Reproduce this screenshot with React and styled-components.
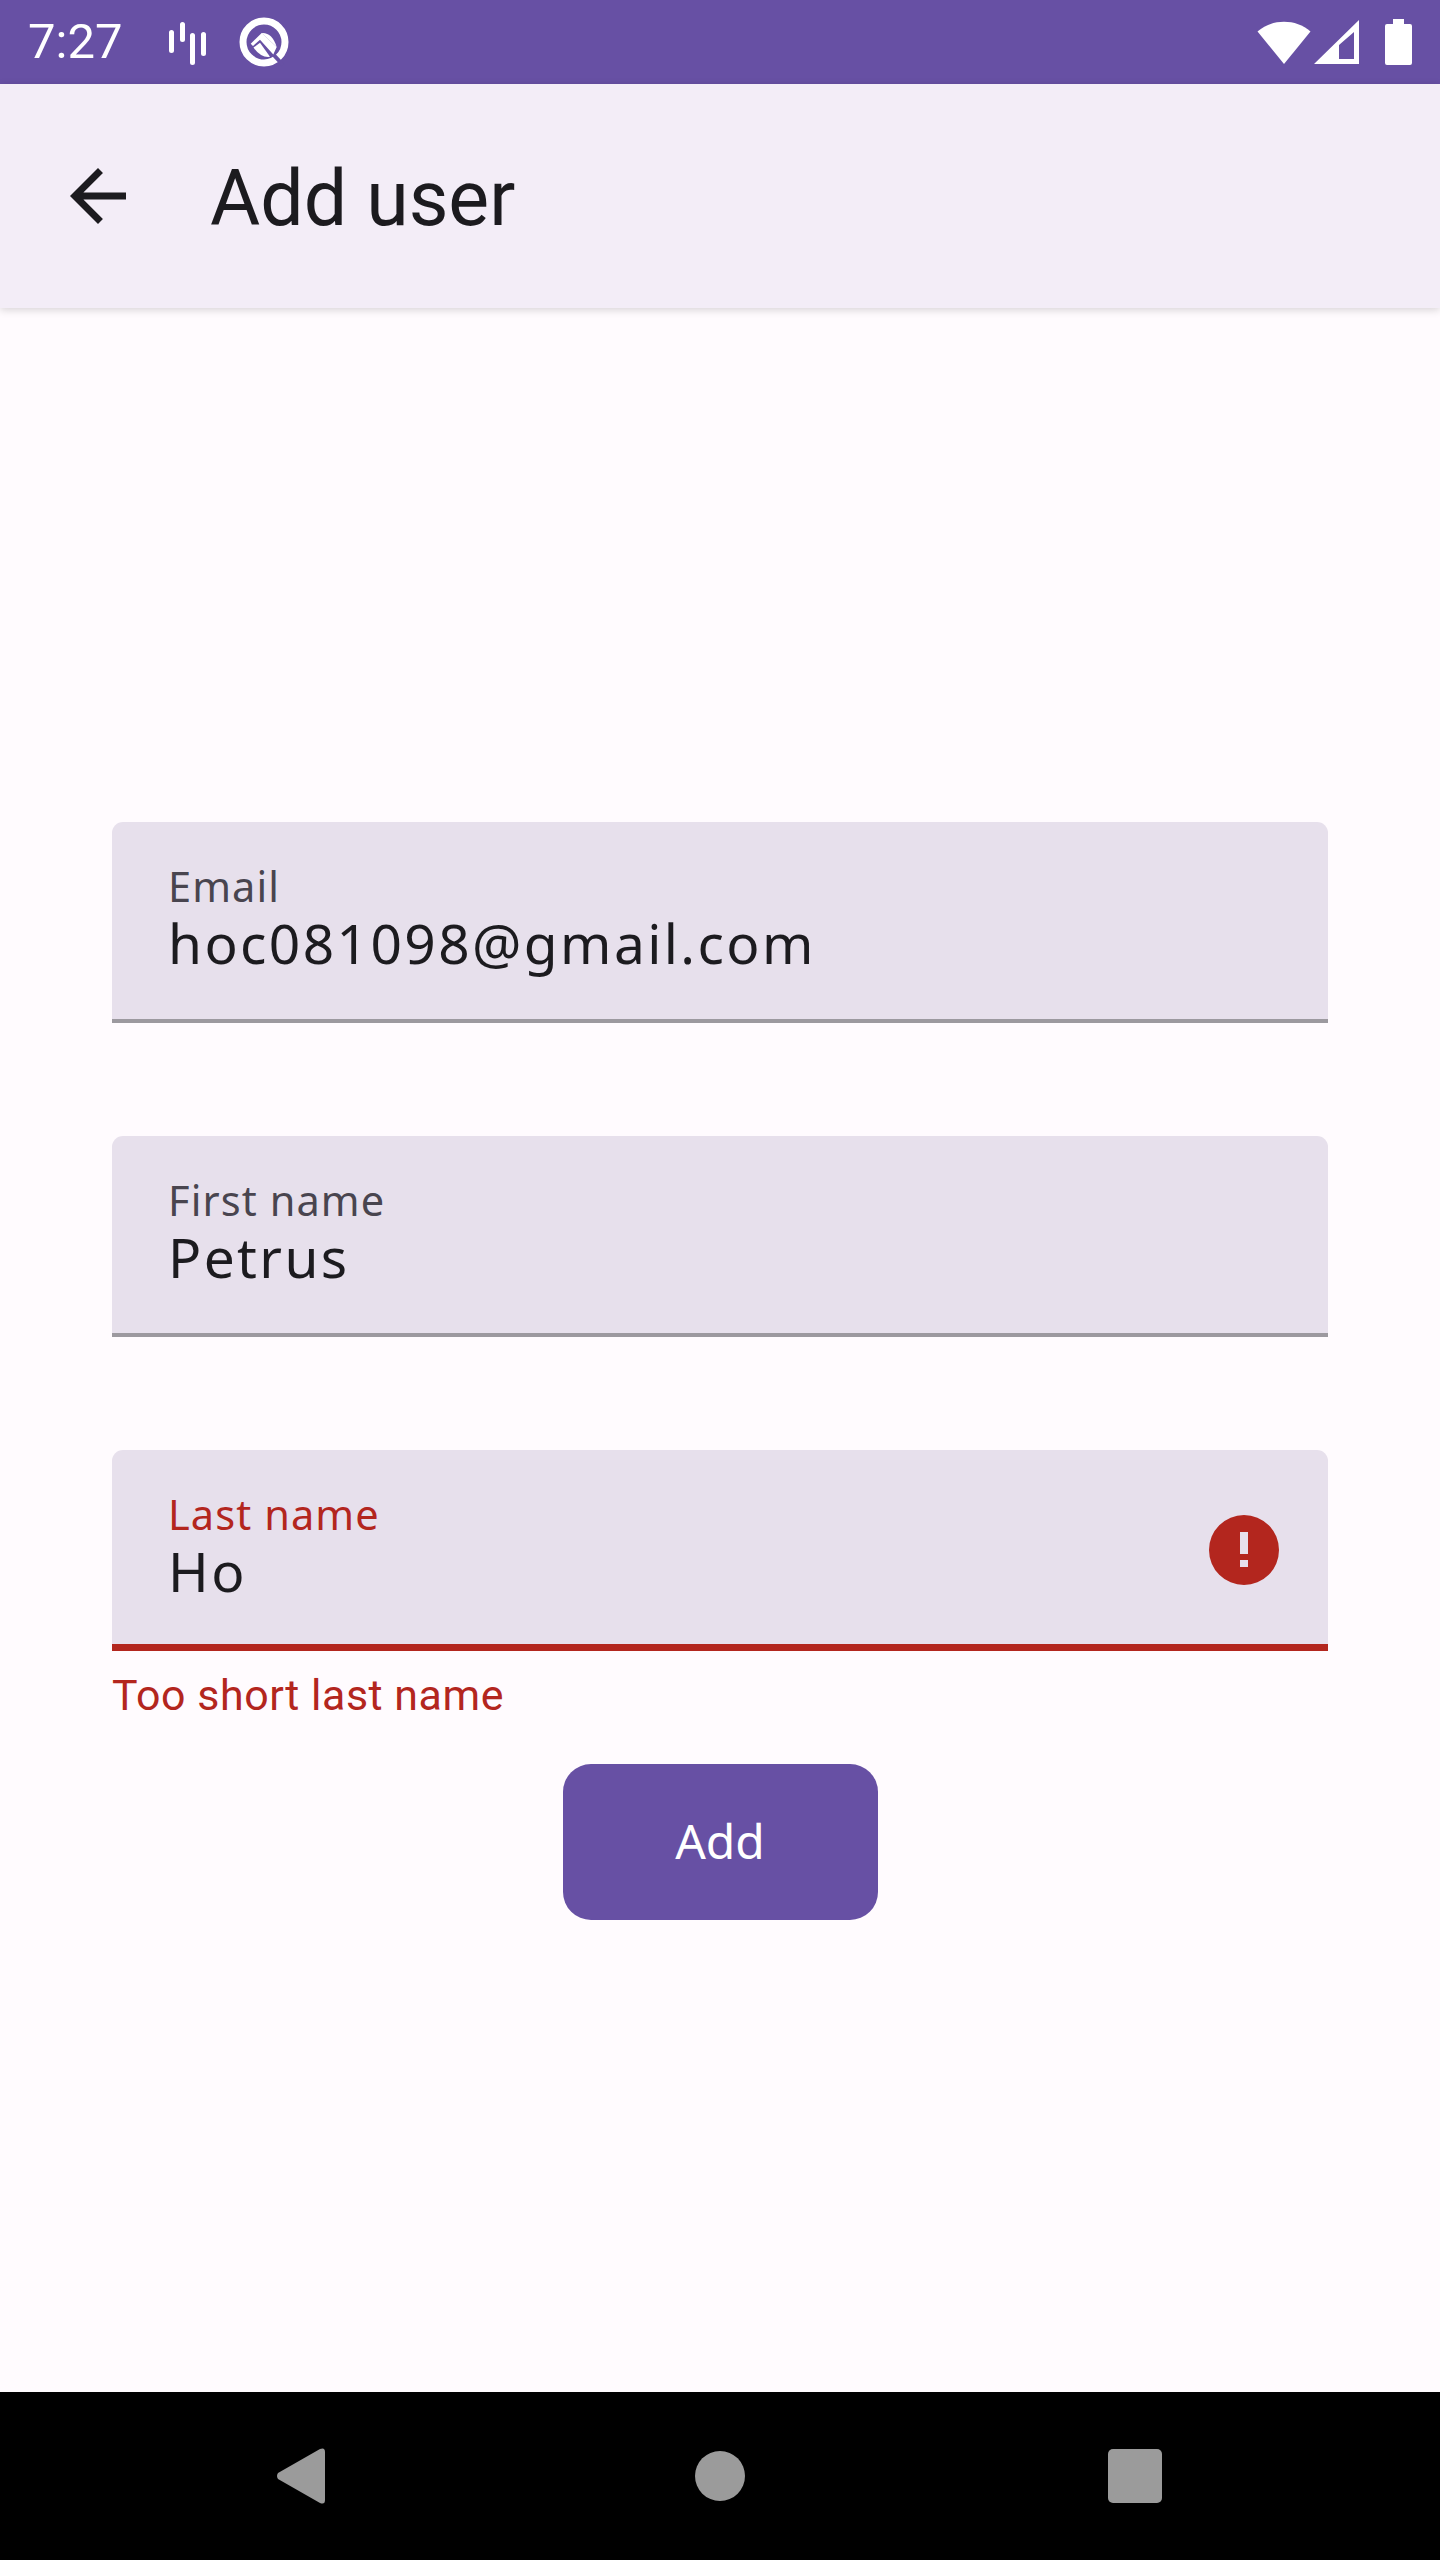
import React from 'react';
import styled, { createGlobalStyle } from 'styled-components';

const Global = createGlobalStyle`
  html, body { margin: 0; padding: 0; background: #fffbfe; }
  #root { width: 1440px; }
`;
const Screen = styled.div`
  width: 1440px; height: 2560px; display: flex; flex-direction: column;
  background: #fffbfe; overflow: hidden; font-family: "Noto Sans", sans-serif;
`;
const StatusBar = styled.div`
  height: 84px; flex: none; background: #6750a4; display: flex; align-items: center;
  padding: 0 28px; box-sizing: border-box; color: #fff;
`;
const Time = styled.span`
  font: 400 49px/84px Roboto, sans-serif; width: 141px; margin-top: -1px;
`;
const StatusLeftIcons = styled.div`display: flex; align-items: center; gap: 28px; flex: 1;`;
const StatusRightIcons = styled.div`display: flex; align-items: center;`;
const AppBar = styled.header`
  height: 224px; flex: none; background: #f3edf7; display: flex; align-items: center;
  padding-left: 56px; box-sizing: border-box; position: relative;
  box-shadow: 0 2px 8px rgba(0,0,0,.16);
`;
const BackIcon = styled.svg`width: 84px; height: 84px; fill: #1c1b1f; flex: none;`;
const Title = styled.h1`
  margin: 6px 0 0 70px; font: 400 77px/1 Roboto, sans-serif; color: #1c1b1f;
`;
const Main = styled.main`
  flex: 1; display: flex; flex-direction: column; padding: 514px 112px 0;
`;
const FieldBlock = styled.div`
  margin-bottom: ${p => p.$error ? 0 : 113}px;
`;
const Field = styled.div`
  height: 201px; box-sizing: border-box; background: #e7e0ec;
  border-radius: 11px 11px 0 0; padding: 37px 56px 0 56px;
  border-bottom: ${p => p.$error ? '7px solid #b3261e' : '4px solid #9c999f'};
  display: flex; align-items: flex-start; justify-content: space-between;
`;
const FieldText = styled.div`display: flex; flex-direction: column;`;
const Label = styled.label`
  font: 400 41.5px/54px "Noto Sans", sans-serif; letter-spacing: 1.1px;
  color: ${p => p.$error ? '#b3261e' : '#49454f'};
`;
const Value = styled.div`
  font: 400 55px/60px "Noto Sans", sans-serif; color: #1c1b1f; letter-spacing: 2.4px;
`;
const ErrorIcon = styled.svg`width: 70px; height: 70px; margin: 28px -7px 0 0; flex: none;`;
const ErrorText = styled.div`
  margin-top: 16px; font: 400 42.9px/56px Roboto, sans-serif; letter-spacing: .55px; color: #b3261e;
`;
const AddButton = styled.button`
  align-self: center; width: 315px; height: 156px; margin-top: 41px; border: 0; border-radius: 28px;
  padding: 0 0 3px; background: #6750a4; color: #fff; font: 400 48px/1 "Noto Sans", sans-serif;
`;
const NavBar = styled.nav`
  height: 168px; flex: none; background: #000; display: flex; align-items: center;
  padding-left: 277px;
`;
const NavIcon = styled.svg`display: block; fill: #9b9b9b; flex: none; margin-left: ${p => p.$gap || 0}px;`;

export default function App() {
  return (
    <Screen>
      <Global />
      <StatusBar>
        <Time>7:27</Time>
        <StatusLeftIcons>
          <svg width="40" height="46" viewBox="0 0 40 46" fill="none" stroke="#fff" strokeWidth="5" strokeLinecap="round">
            <path d="M2.5 13.5v18M13.5 5.5v15M23.5 16.5v27M34.5 15.5v19" />
          </svg>
          <svg width="54" height="54" viewBox="0 0 54 54" fill="none">
            <circle cx="27" cy="27" r="21" stroke="#fff" strokeWidth="7" />
            <path d="M34 37 L46 50" stroke="#6750a4" strokeWidth="4" />
            <path d="M24.7 18 L13.7 28.8 L16 31 L23 24.8 L36.3 39.5 L39.7 32 Z" fill="#fff" />
            <path d="M16.5 32.5 L23 27.8 L33 41.8 Q24 43 16.5 32.5 Z" fill="#fff" />
            <path d="M24.5 18 Q35 17 39.7 32 Z" fill="#fff" />
          </svg>
        </StatusLeftIcons>
        <StatusRightIcons>
          <svg width="54" height="46" viewBox="0 0 54 46" fill="#fff" style={{ marginRight: 3 }}>
            <path d="M0.5 12.5 C15 -0.5 39 -0.5 53.5 12.5 L27 45 Z" />
          </svg>
          <svg width="46" height="44" viewBox="0 0 46 44" fill="#fff" fillRule="evenodd" style={{ marginRight: 24 }}>
            <path d="M45 0 V44 H0 Z M40 12 L25 25 V39 H40 Z" />
          </svg>
          <svg width="28" height="46" viewBox="0 0 28 46" fill="#fff">
            <path d="M9 0h11v5h6a2 2 0 0 1 2 2v37a2 2 0 0 1-2 2H3a2 2 0 0 1-2-2V7a2 2 0 0 1 2-2h6z" />
          </svg>
        </StatusRightIcons>
      </StatusBar>
      <AppBar>
        <BackIcon viewBox="0 0 24 24"><path d="M20 11H7.83l5.59-5.59L12 4l-8 8 8 8 1.41-1.41L7.83 13H20v-2z" /></BackIcon>
        <Title>Add user</Title>
      </AppBar>
      <Main>
        <FieldBlock>
          <Field>
            <FieldText><Label>Email</Label><Value>hoc081098@gmail.com</Value></FieldText>
          </Field>
        </FieldBlock>
        <FieldBlock>
          <Field>
            <FieldText><Label>First name</Label><Value>Petrus</Value></FieldText>
          </Field>
        </FieldBlock>
        <FieldBlock $error>
          <Field $error>
            <FieldText><Label $error>Last name</Label><Value>Ho</Value></FieldText>
            <ErrorIcon viewBox="0 0 70 70">
              <path fillRule="evenodd" fill="#b3261e" d="M35 0a35 35 0 1 1 0 70a35 35 0 1 1 0-70z M31 17v22h8V17z M31 45v7h8v-7z" />
            </ErrorIcon>
          </Field>
          <ErrorText>Too short last name</ErrorText>
        </FieldBlock>
        <AddButton>Add</AddButton>
      </Main>
      <NavBar>
        <NavIcon width="48" height="56" viewBox="0 0 48 56"><path d="M1 25 L43 1 Q48 -1 48 4 V52 Q48 57 43 55 L1 31 Q-1 28 1 25 Z" /></NavIcon>
        <NavIcon $gap={370} width="50" height="50" viewBox="0 0 50 50"><circle cx="25" cy="25" r="25" /></NavIcon>
        <NavIcon $gap={363} width="54" height="54" viewBox="0 0 54 54"><rect width="54" height="54" rx="5" /></NavIcon>
      </NavBar>
    </Screen>
  );
}
